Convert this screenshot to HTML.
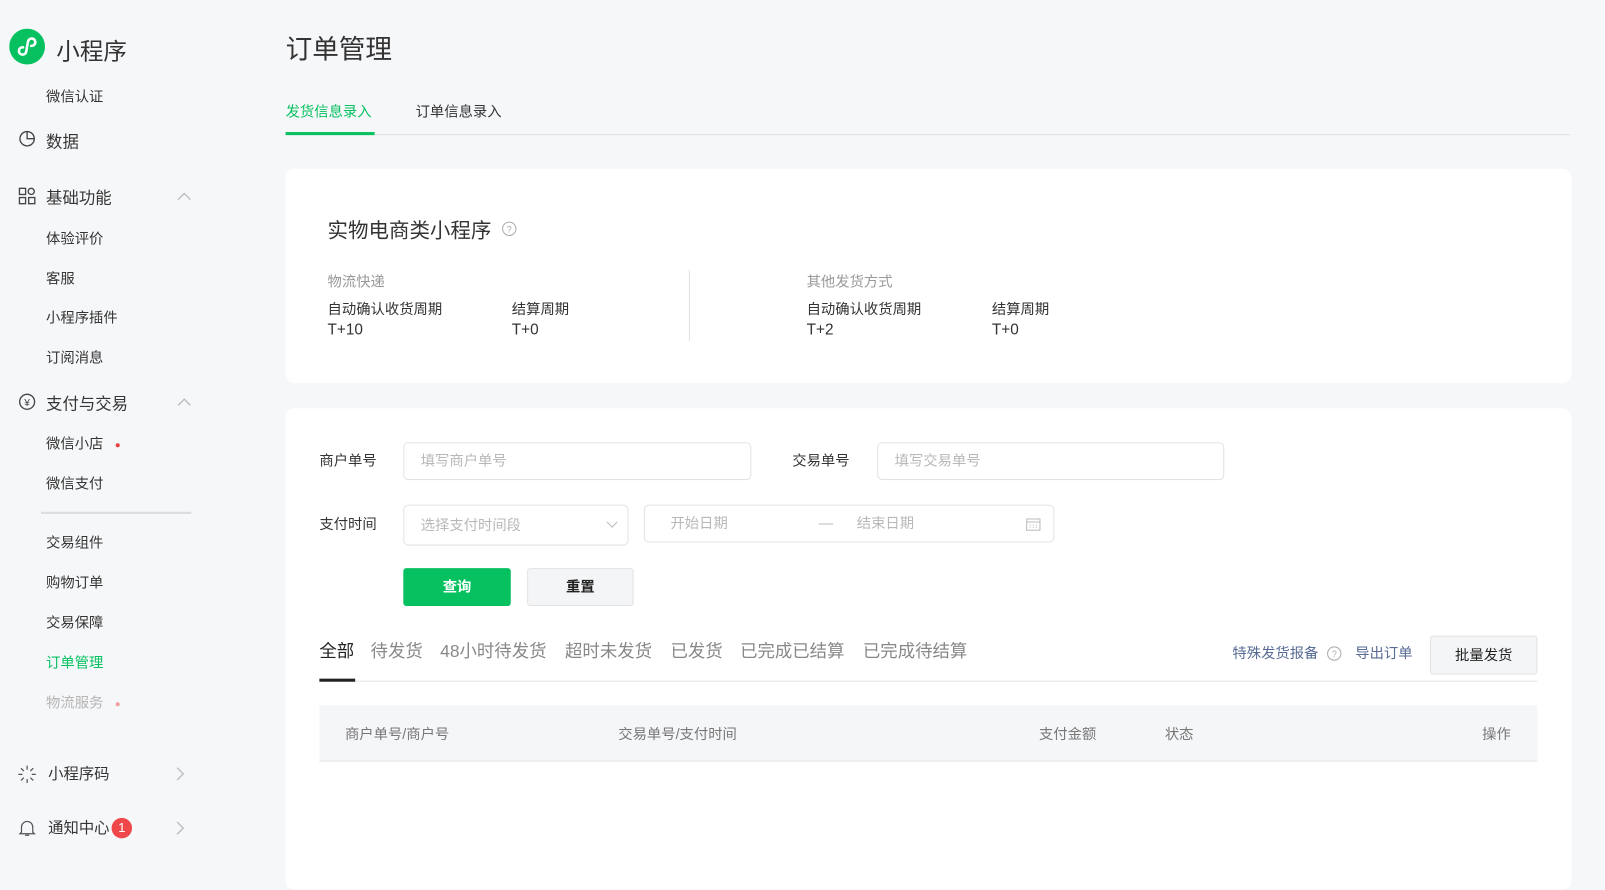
<!DOCTYPE html>
<html><head><meta charset="utf-8"><style>
*{margin:0;padding:0;box-sizing:border-box}
html,body{width:1605px;height:861px;overflow:hidden;background:#f6f7f9}
#w{position:absolute;left:0;top:0;width:1568px;height:841px;transform:scale(1.0236);transform-origin:0 0;font-family:"Liberation Sans","Noto Sans CJK SC",sans-serif;color:#333;font-size:14px}
.a{position:absolute;white-space:nowrap}
.side{color:#353535;font-size:14px}
.g{color:#999}
.card{position:absolute;background:#fff;border-radius:8px}
.inp{position:absolute;border:1px solid #e3e3e3;border-radius:5px;background:#fff;color:#b8b8b8;font-size:14px;padding-left:16px;line-height:34px}
</style></head><body><div id="w">
<svg class="a" style="left:9px;top:28px" width="35" height="35" viewBox="0 0 35 35"><circle cx="17.5" cy="17.5" r="17.5" fill="#07c160"/><path d="M13.5 18.2A3.6 3.6 0 1 0 16.6 22.5L18.4 12.5A3.6 3.6 0 1 1 21.5 16.8" fill="none" stroke="#fff" stroke-width="2.5" stroke-linecap="round"/></svg>
<div class="a" style="left:55px;top:31px;font-size:23px;color:#333">小程序</div>
<div class="a side" style="left:45px;top:84px">微信认证</div>
<svg class="a" style="left:18px;top:127px" width="17" height="17" viewBox="0 0 17 17"><circle cx="8.5" cy="8.5" r="7" fill="none" stroke="#444" stroke-width="1.3"/><path d="M8.5 1.5v7h7" fill="none" stroke="#444" stroke-width="1.3"/></svg>
<div class="a side" style="left:45px;top:125px;font-size:16px">数据</div>
<svg class="a" style="left:18px;top:183px" width="17" height="17" viewBox="0 0 17 17" fill="none" stroke="#444" stroke-width="1.3"><rect x="1" y="1" width="6" height="6"/><circle cx="12.5" cy="4" r="3"/><rect x="1" y="10" width="6" height="6"/><rect x="10" y="10" width="6" height="6"/></svg>
<div class="a side" style="left:45px;top:180px;font-size:16px">基础功能</div>
<svg class="a" style="left:173px;top:187px" width="14" height="9"><path d="M1 8l6-6 6 6" fill="none" stroke="#bbb" stroke-width="1.3"/></svg>
<div class="a side" style="left:45px;top:223px">体验评价</div>
<div class="a side" style="left:45px;top:262px">客服</div>
<div class="a side" style="left:45px;top:300px">小程序插件</div>
<div class="a side" style="left:45px;top:339px">订阅消息</div>
<svg class="a" style="left:18px;top:384px" width="17" height="17" viewBox="0 0 17 17"><circle cx="8.5" cy="8.5" r="7.3" fill="none" stroke="#444" stroke-width="1.3"/><text x="8.5" y="12.5" font-size="10" text-anchor="middle" fill="#444" font-family="Liberation Sans">¥</text></svg>
<div class="a side" style="left:45px;top:381px;font-size:16px">支付与交易</div>
<svg class="a" style="left:173px;top:388px" width="14" height="9"><path d="M1 8l6-6 6 6" fill="none" stroke="#bbb" stroke-width="1.3"/></svg>
<div class="a side" style="left:45px;top:423px">微信小店</div>
<div class="a" style="left:113px;top:433px;width:4px;height:4px;border-radius:2px;background:#e64340"></div>
<div class="a side" style="left:45px;top:462px">微信支付</div>
<div class="a" style="left:40px;top:500px;width:147px;height:2px;background:#dcdcdc"></div>
<div class="a side" style="left:45px;top:520px">交易组件</div>
<div class="a side" style="left:45px;top:559px">购物订单</div>
<div class="a side" style="left:45px;top:598px">交易保障</div>
<div class="a" style="left:45px;top:637px;color:#07c160;font-size:14px">订单管理</div>
<div class="a" style="left:45px;top:676px;color:#b5b5b5">物流服务</div>
<div class="a" style="left:113px;top:686px;width:4px;height:4px;border-radius:2px;background:#f0a0a0"></div>
<svg class="a" style="left:17px;top:747px" width="19" height="19" viewBox="0 0 19 19" stroke="#555" stroke-width="1.2"><path d="M9.5 1v4M9.5 14v4M1 9.5h4M14 9.5h4M3.5 3.5l2.8 2.8M12.7 12.7l2.8 2.8M3.5 15.5l2.8-2.8M12.7 6.3l2.8-2.8"/></svg>
<div class="a side" style="left:47px;top:745px;font-size:15px">小程序码</div>
<svg class="a" style="left:172px;top:749px" width="9" height="14"><path d="M1 1l6 6-6 6" fill="none" stroke="#bbb" stroke-width="1.3"/></svg>
<svg class="a" style="left:18px;top:800px" width="17" height="18" viewBox="0 0 17 18" fill="none" stroke="#555" stroke-width="1.2"><path d="M3 13V8a5.5 5.5 0 0 1 11 0v5l1.5 1.5h-14z M6.5 16h4"/></svg>
<div class="a side" style="left:47px;top:798px;font-size:15px">通知中心</div>
<div class="a" style="left:109px;top:799px;width:20px;height:20px;border-radius:10px;background:#f0484a;color:#fff;font-size:13px;text-align:center;line-height:20px">1</div>
<svg class="a" style="left:172px;top:802px" width="9" height="14"><path d="M1 1l6 6-6 6" fill="none" stroke="#bbb" stroke-width="1.3"/></svg>

<div class="a" style="left:279px;top:28px;font-size:26px;color:#333">订单管理</div>
<div class="a" style="left:279px;top:99px;color:#07c160">发货信息录入</div>
<div class="a" style="left:406px;top:99px;color:#333">订单信息录入</div>
<div class="a" style="left:279px;top:131px;width:1255px;height:1px;background:#e2e2e2"></div>
<div class="a" style="left:279px;top:129px;width:87px;height:3px;background:#07c160"></div>

<div class="card" style="left:279px;top:165px;width:1256px;height:209px"></div>
<div class="a" style="left:320px;top:209px;font-size:20px;color:#333">实物电商类小程序</div>
<svg class="a" style="left:490px;top:216px" width="15" height="15"><circle cx="7.5" cy="7.5" r="6.5" fill="none" stroke="#aaa"/><text x="7.5" y="11" font-size="9" text-anchor="middle" fill="#aaa">?</text></svg>
<div class="a g" style="left:320px;top:265px;font-size:14px">物流快递</div>
<div class="a" style="left:320px;top:292px">自动确认收货周期</div>
<div class="a" style="left:320px;top:314px;font-size:15px">T+10</div>
<div class="a" style="left:500px;top:292px">结算周期</div>
<div class="a" style="left:500px;top:314px;font-size:15px">T+0</div>
<div class="a" style="left:673px;top:264px;width:1px;height:69px;background:#e0e0e0"></div>
<div class="a g" style="left:788px;top:265px">其他发货方式</div>
<div class="a" style="left:788px;top:292px">自动确认收货周期</div>
<div class="a" style="left:788px;top:314px;font-size:15px">T+2</div>
<div class="a" style="left:969px;top:292px">结算周期</div>
<div class="a" style="left:969px;top:314px;font-size:15px">T+0</div>

<div class="card" style="left:279px;top:399px;width:1256px;height:470px"></div>
<div class="a" style="left:312px;top:440px">商户单号</div>
<div class="inp" style="left:394px;top:432px;width:340px;height:37px">填写商户单号</div>
<div class="a" style="left:774px;top:440px">交易单号</div>
<div class="inp" style="left:857px;top:432px;width:339px;height:37px">填写交易单号</div>
<div class="a" style="left:312px;top:502px">支付时间</div>
<div class="inp" style="left:394px;top:493px;width:220px;height:40px;line-height:38px">选择支付时间段</div>
<svg class="a" style="left:592px;top:509px" width="12" height="8"><path d="M1 1l5 5 5-5" fill="none" stroke="#bbb"/></svg>
<div class="inp" style="left:629px;top:493px;width:401px;height:37px;padding-left:25px">开始日期<span style="position:absolute;left:170px">—</span><span style="position:absolute;left:207px">结束日期</span></div>
<svg class="a" style="left:1002px;top:505px" width="15" height="14" fill="none" stroke="#bbb"><rect x="1" y="2" width="13" height="11"/><path d="M1 5h13M4 8h1M7 8h1M10 8h1M4 10.5h1M7 10.5h1M10 10.5h1"/></svg>
<div class="a" style="left:394px;top:555px;width:105px;height:37px;background:#07c160;border-radius:3px;color:#fff;text-align:center;line-height:37px;font-weight:bold">查询</div>
<div class="a" style="left:515px;top:555px;width:104px;height:37px;background:#f4f5f7;border:1px solid #e2e2e2;border-radius:3px;color:#222;text-align:center;line-height:35px;font-weight:bold">重置</div>

<div class="a" style="left:312px;top:622px;font-size:17px;color:#222">全部</div>
<div class="a" style="left:362px;top:622px;font-size:17px;color:#888">待发货</div>
<div class="a" style="left:430px;top:622px;font-size:17px;color:#888">48小时待发货</div>
<div class="a" style="left:552px;top:622px;font-size:17px;color:#888">超时未发货</div>
<div class="a" style="left:655px;top:622px;font-size:17px;color:#888">已发货</div>
<div class="a" style="left:723px;top:622px;font-size:17px;color:#888">已完成已结算</div>
<div class="a" style="left:843px;top:622px;font-size:17px;color:#888">已完成待结算</div>
<div class="a" style="left:312px;top:665px;width:1190px;height:1px;background:#e5e5e5"></div>
<div class="a" style="left:312px;top:663px;width:35px;height:3px;background:#222"></div>
<div class="a" style="left:1204px;top:628px;color:#576b95">特殊发货报备</div>
<svg class="a" style="left:1296px;top:631px" width="15" height="15"><circle cx="7.5" cy="7.5" r="6.5" fill="none" stroke="#aaa"/><text x="7.5" y="11" font-size="9" text-anchor="middle" fill="#aaa">?</text></svg>
<div class="a" style="left:1324px;top:628px;color:#576b95">导出订单</div>
<div class="a" style="left:1397px;top:621px;width:105px;height:38px;background:#f4f5f7;border:1px solid #e2e2e2;border-radius:3px;text-align:center;line-height:36px;color:#222">批量发货</div>

<div class="a" style="left:312px;top:689px;width:1190px;height:55px;background:#f5f6f8;border-bottom:1px solid #e5e5e5"></div>
<div class="a" style="left:337px;top:707px;color:#777">商户单号/商户号</div>
<div class="a" style="left:604px;top:707px;color:#777">交易单号/支付时间</div>
<div class="a" style="left:1015px;top:707px;color:#777">支付金额</div>
<div class="a" style="left:1138px;top:707px;color:#777">状态</div>
<div class="a" style="left:1448px;top:707px;color:#777">操作</div>
</div></body></html>
